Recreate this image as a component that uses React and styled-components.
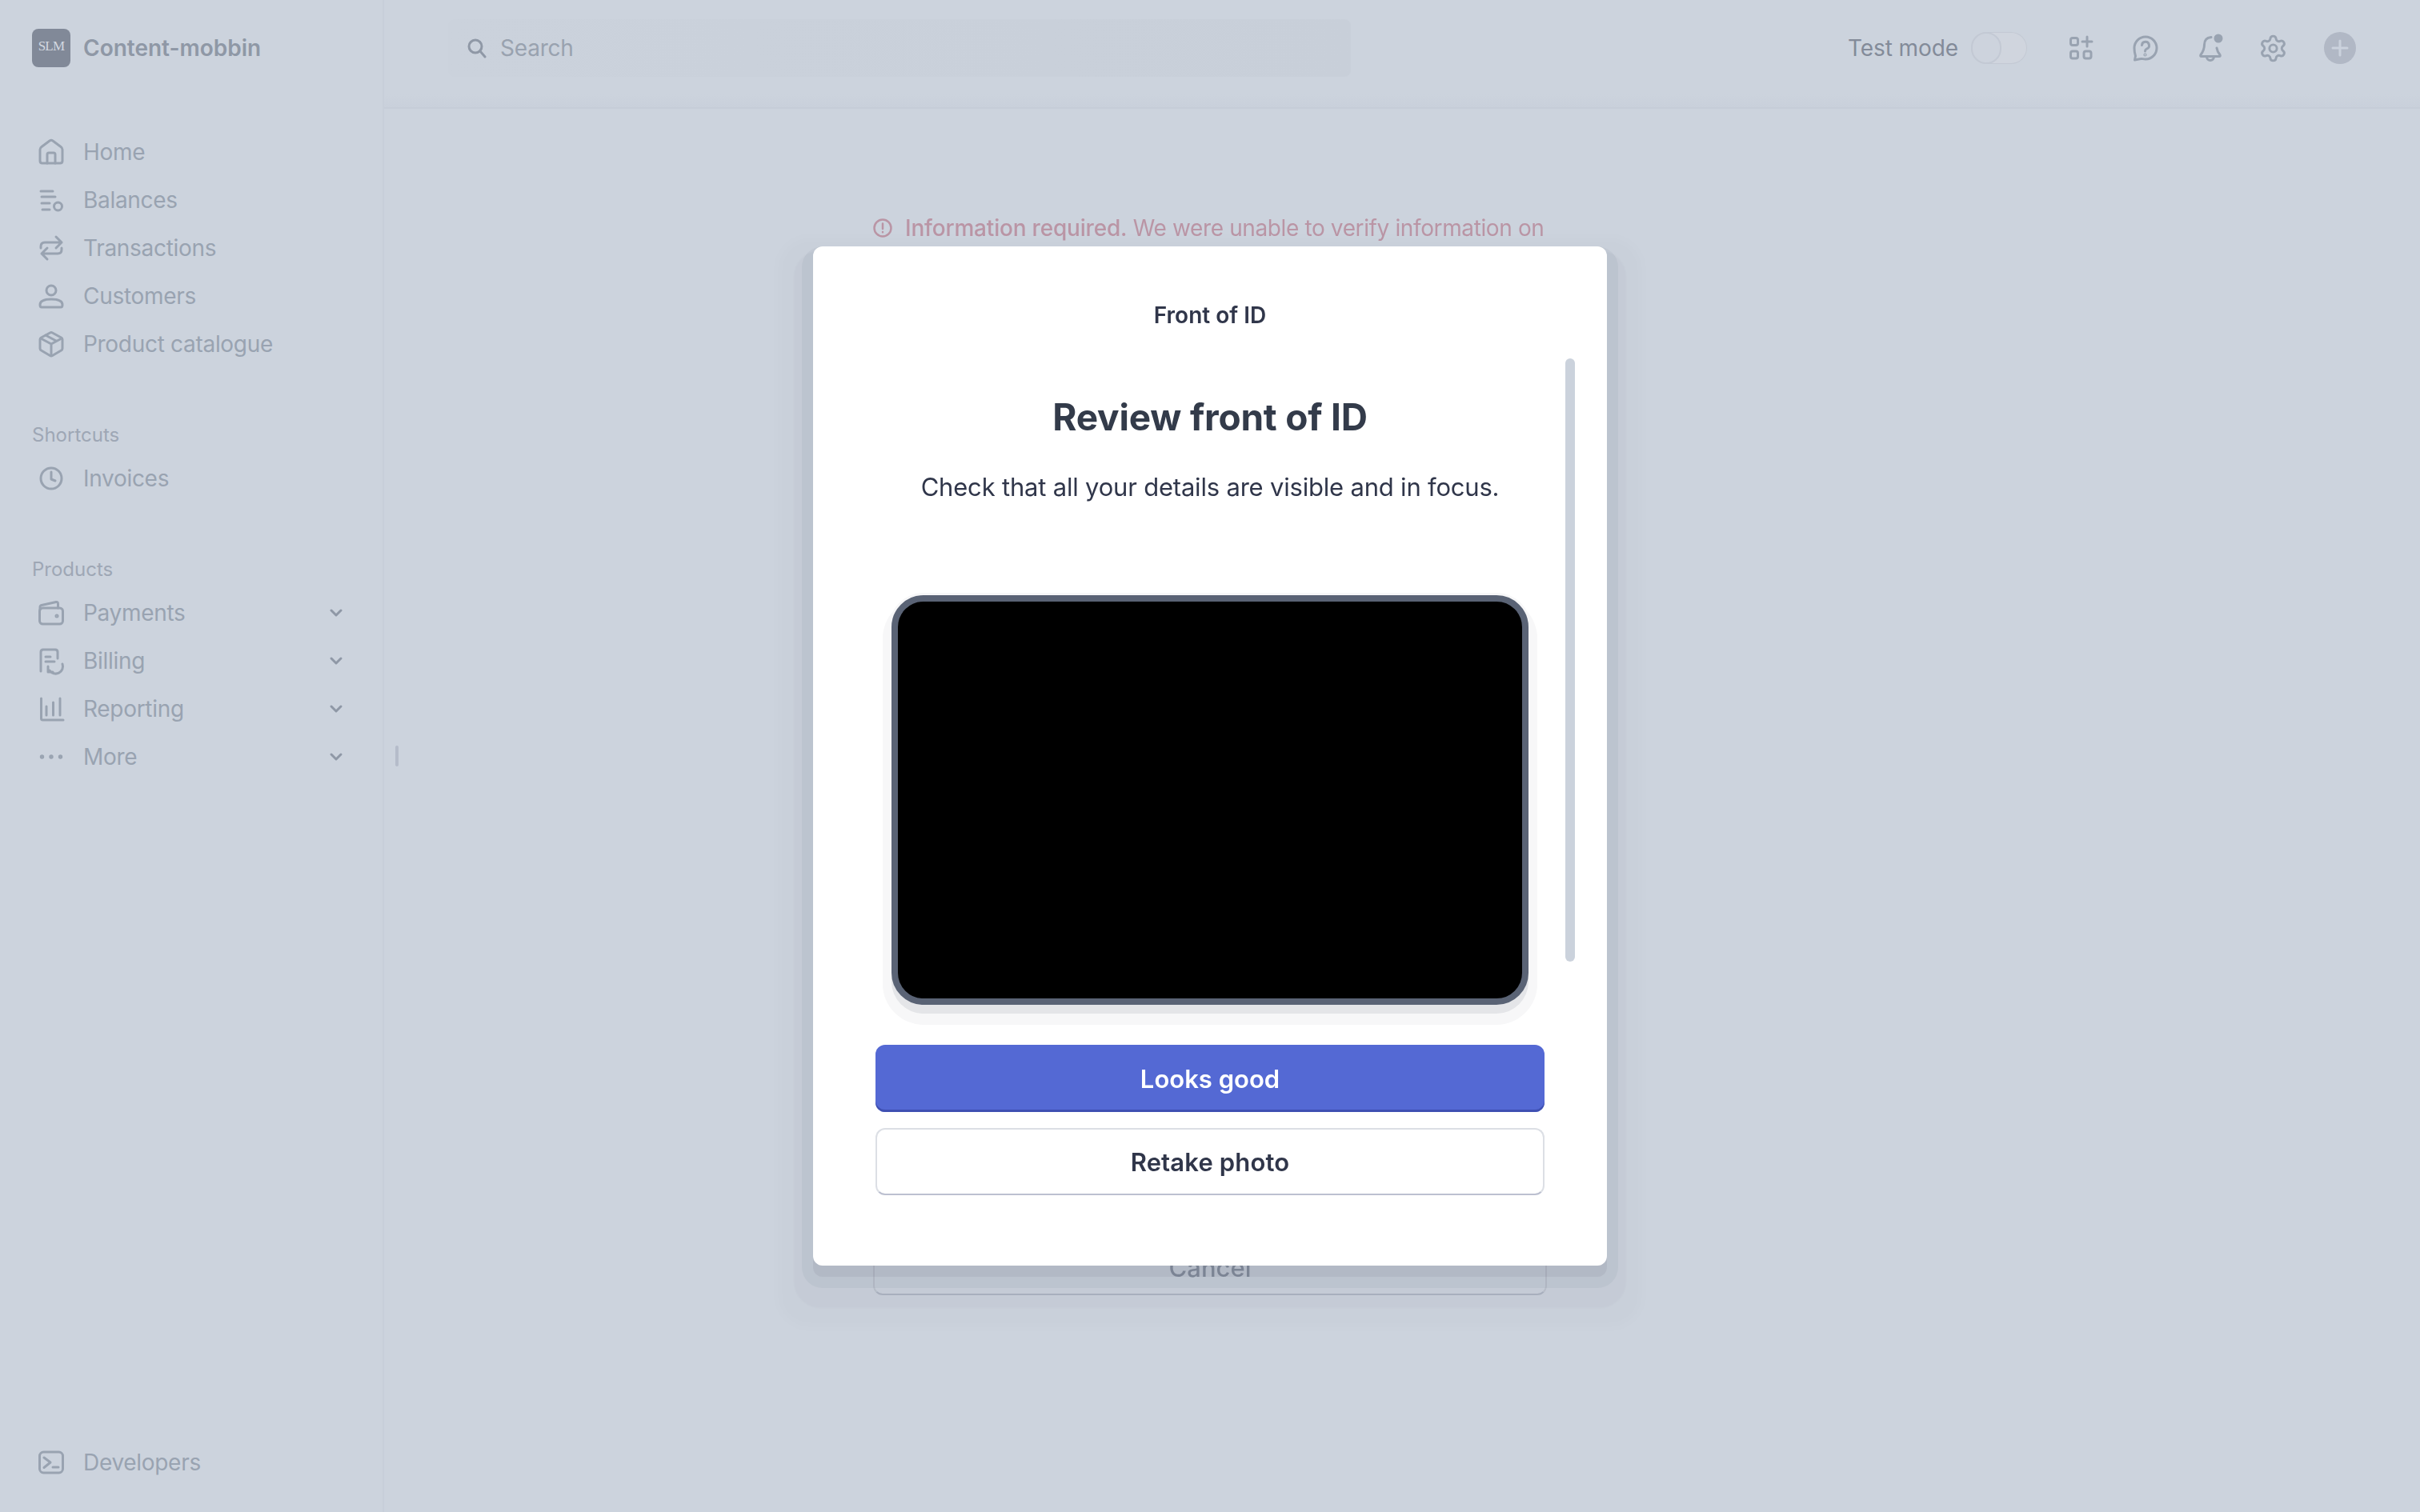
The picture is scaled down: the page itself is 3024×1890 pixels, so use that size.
import React from "react";
import styled, { createGlobalStyle } from "styled-components";
import { Settings } from "lucide-react";

const GlobalStyle = createGlobalStyle`
  html, body {
    margin: 0;
    height: 100%;
    background: #ccd3dd;
    font-family: "Inter", "Liberation Sans", sans-serif;
  }
  * {
    box-sizing: border-box;
  }
`;

const Page = styled.div`
  display: flex;
  width: 100%;
  height: 100vh;
  overflow: hidden;
  background: #ccd3dd;
`;

const Sidebar = styled.aside`
  position: relative;
  display: flex;
  flex-direction: column;
  flex: 0 0 480px;
  padding: 36px 0 32px;
  border-right: 2px solid #c7ced9;
`;

const Brand = styled.div`
  display: flex;
  align-items: center;
  gap: 16px;
  height: 48px;
  padding-left: 40px;
  margin-bottom: 76px;
`;

const LogoBox = styled.div`
  display: flex;
  justify-content: center;
  padding-top: 12px;
  width: 48px;
  height: 48px;
  border-radius: 8px;
  background: #818998;
  color: #d3d8e0;
  font-family: "Liberation Serif", serif;
  font-size: 17px;
  line-height: 20px;
  letter-spacing: -0.8px;
  overflow: hidden;
`;

const BrandName = styled.span`
  font-size: 28px;
  font-weight: 600;
  color: #8f98a6;
`;

const NavGroup = styled.nav`
  display: flex;
  flex-direction: column;
  margin-bottom: 68px;
`;

const GroupLabel = styled.div`
  height: 32px;
  margin-bottom: 8px;
  padding-left: 40px;
  font-size: 24px;
  line-height: 32px;
  color: #9ea7b5;
`;

const NavRow = styled.a`
  display: flex;
  align-items: center;
  gap: 24px;
  height: 60px;
  padding: 0 48px 0 48px;
  font-size: 28px;
  letter-spacing: -0.3px;
  color: #99a3b1;
`;

const NavText = styled.span`
  flex: 1;
`;

const BottomNav = styled.div`
  margin-top: auto;
`;

const ResizeHandle = styled.div`
  position: absolute;
  left: 494px;
  top: 932px;
  width: 4px;
  height: 26px;
  border-radius: 2px;
  background: #b5bcca;
`;

const Main = styled.main`
  flex: 1;
  min-width: 0;
`;

const TopBar = styled.header`
  display: flex;
  align-items: center;
  justify-content: space-between;
  height: 136px;
  padding: 0 80px 14px 80px;
  border-bottom: 2px solid #c6cdd8;
  background: linear-gradient(to bottom, #ccd3dd 88%, #c9d0db 100%);
`;

const SearchBox = styled.div`
  display: flex;
  align-items: center;
  gap: 17px;
  width: 1128px;
  height: 72px;
  padding-left: 24px;
  border-radius: 8px;
  background: linear-gradient(to right, #cbd2dc, #c8cfd9);
  font-size: 28px;
  letter-spacing: -0.2px;
  color: #99a2af;
`;

const TopActions = styled.div`
  display: flex;
  align-items: center;
`;

const TestLabel = styled.span`
  margin-right: 16px;
  font-size: 28px;
  letter-spacing: -0.1px;
  color: #838b99;
`;

const Toggle = styled.div`
  width: 70px;
  height: 40px;
  margin-right: 51px;
  border-radius: 20px;
  background: #d0d5de;
  box-shadow: inset 0 0 0 1px #c3c9d4;
`;

const ToggleKnob = styled.div`
  width: 38px;
  height: 40px;
  border-radius: 20px;
  background: #cdd3dd;
  border: 2px solid #c3c9d4;
`;

const IconSlot = styled.div`
  display: flex;
  align-items: center;
  justify-content: center;
  width: 32px;
  height: 32px;
  margin-right: ${(p) => p.$gap}px;
  color: #99a3b1;
`;

const AddButton = styled.div`
  display: flex;
  align-items: center;
  justify-content: center;
  width: 40px;
  height: 40px;
  border-radius: 50%;
  background: #b1b8c5;
`;

const Overlay = styled.div`
  position: fixed;
  inset: 0;
  display: flex;
  flex-direction: column;
  align-items: center;
  padding-top: 308px;
`;

const BackSheet = styled.div`
  position: absolute;
  top: 266px;
  left: 1091px;
  display: flex;
  flex-direction: column;
  justify-content: space-between;
  width: 842px;
  height: 1353px;
`;

const Notice = styled.div`
  display: flex;
  align-items: center;
  gap: 16px;
  height: 38px;
  font-size: 28px;
  letter-spacing: -0.38px;
  color: #ba95a5;
  white-space: nowrap;
`;

const NoticeStrong = styled.span`
  font-weight: 500;
  letter-spacing: -0.2px;
`;

const CancelButton = styled.div`
  display: flex;
  align-items: center;
  justify-content: center;
  height: 70px;
  border: 2px solid #bcc3ce;
  border-bottom-color: #aeb5c3;
  border-radius: 12px;
  font-size: 31px;
  font-weight: 500;
  color: #8b93a2;
`;

const Modal = styled.section`
  position: relative;
  width: 992px;
  height: 1274px;
  padding: 66px 78px 0;
  border-radius: 12px;
  background: #fff;
  box-shadow:
    0 14px 0 0 rgba(60, 66, 87, 0.08),
    0 14px 0 14px rgba(60, 66, 87, 0.055),
    0 29px 2px 24px rgba(60, 66, 87, 0.03),
    0 33px 16px 44px rgba(60, 66, 87, 0.014);
`;

const ModalTitle = styled.div`
  height: 40px;
  font-size: 28px;
  font-weight: 600;
  line-height: 40px;
  text-align: center;
  color: #30364a;
`;

const ScrollThumb = styled.div`
  position: absolute;
  top: 140px;
  right: 40px;
  width: 12px;
  height: 754px;
  border-radius: 6px;
  background: #cbd2dc;
`;

const Heading = styled.h1`
  margin: 77px 0 0;
  font-size: 46px;
  font-weight: 700;
  line-height: 60px;
  letter-spacing: -0.2px;
  text-align: center;
  color: #333b4a;
`;

const Lead = styled.p`
  margin: 36px 0 0;
  font-size: 31px;
  line-height: 44px;
  letter-spacing: -0.2px;
  text-align: center;
  color: #30364a;
`;

const PhotoFrame = styled.div`
  height: 512px;
  margin: 113px 20px 50px;
  border: 8px solid #5a6375;
  border-radius: 40px;
  background: #000;
  box-shadow:
    0 11px 0 0 #e4e5e8,
    0 14px 0 11px #f7f7f8,
    0 0 0 3px #f7f7f8;
`;

const ActionButton = styled.button`
  display: block;
  width: 100%;
  height: 84px;
  margin-bottom: ${(p) => p.$gap || 0}px;
  border-radius: 12px;
  font-family: inherit;
  font-size: 31px;
  font-weight: 600;
  cursor: pointer;
  ${(p) =>
    p.$primary
      ? `
    border: 0;
    background: #5469d4;
    color: #fff;
    box-shadow: inset 0 -3px 0 #3f50b2;
  `
      : `
    border: 2px solid #dcdfe5;
    border-bottom-color: #bcc0d0;
    background: #fff;
    color: #30364a;
    letter-spacing: 0.15px;
  `}
`;

const Glyph = ({ children, size = 32, fill = "none" }) => (
  <svg
    width={size}
    height={size}
    viewBox={`0 0 ${size} ${size}`}
    fill={fill}
    stroke="currentColor"
    strokeWidth="3"
    strokeLinecap="round"
    strokeLinejoin="round"
    style={{ flex: "none", overflow: "visible" }}
  >
    {children}
  </svg>
);

const icons = {
  home: (
    <>
      <path d="M2 13c0-1.5.8-2.6 2-3.5L14 2q2-1.3 4 0l10 7.5c1.200.9 2 2 2 3.5v14q0 3-3 3H5q-3 0-3-3Z" />
      <path d="M11 30V19q0-2 2-2h6q2 0 2 2v11" />
    </>
  ),
  balances: (
    <>
      <path d="M3 5h15M4 12h17M4 20h10M5 28h9" />
      <circle cx="24.500" cy="24" r="5" />
    </>
  ),
  transactions: (
    <>
      <path d="M3 16v-2q0-5 5-5h21M22 2l7 7-7 7" />
      <path d="M29 16v2q0 5-5 5H4M11 16l-7 7 7 7" />
    </>
  ),
  customers: (
    <>
      <circle cx="16" cy="9" r="6" />
      <path d="M2 27c0-5 6-7 14-7s14 2 14 7q0 3-2 3H4q-2 0-2-3Z" />
    </>
  ),
  catalogue: (
    <>
      <path d="M14.500 2q1.500-.8 3 0L28.500 8q1.500.9 1.500 2.500v11q0 1.600-1.500 2.500L17.500 30.500q-1.500.8-3 0L3.500 24Q2 23.100 2 21.500v-11Q2 8.900 3.500 8Z" />
      <path d="M3 9l13 7 13-7M16 16v14M9 5l13 7" />
    </>
  ),
  invoices: (
    <>
      <circle cx="16" cy="16" r="13" />
      <path d="M16 8v9l5 2" />
    </>
  ),
  payments: (
    <>
      <rect x="1.500" y="10" width="29" height="20" rx="4" />
      <path d="M2 12V9q0-2 2-2.500l18-4q2.500-.5 2.500 2.500v5" />
      <circle cx="23" cy="20" r="1" />
    </>
  ),
  billing: (
    <>
      <path d="M3 29V5q0-3 3-3h15q3 0 3 3v8" />
      <path d="M9 11h6M9 17h11" />
      <path d="M30 20a9 9 0 0 1-16 8M12 23v7h6" />
    </>
  ),
  reporting: (
    <path d="M3.500 3v25q0 2 2 2H31M10 13v11M18.500 8v16M27 3v21" />
  ),
  more: (
    <>
      <circle cx="4.500" cy="16" r="1.200" />
      <circle cx="16" cy="16" r="1.200" />
      <circle cx="27.500" cy="16" r="1.200" />
    </>
  ),
  developers: (
    <>
      <rect x="1.500" y="3" width="29" height="26" rx="5" />
      <path d="M7 10l8 6-8 6.500M18 22h7" />
    </>
  ),
  apps: (
    <>
      <rect x="3.500" y="3.500" width="9" height="9" rx="2.500" />
      <rect x="3.500" y="20" width="9" height="9" rx="2.500" />
      <rect x="20" y="20" width="9" height="9" rx="2.500" />
      <path d="M18 8h12M24 2v12" />
    </>
  ),
  help: (
    <>
      <path d="M17 2a14 14 0 0 1 0 28c-3 0-4-1-6-.500L3.500 31 4.500 26C3.500 23 3 20 3 16A14 14 0 0 1 17 2Z" />
      <path d="M12.500 12.500a4.500 4.500 0 1 1 6 4.500q-2 1-2 3" />
      <circle cx="16.500" cy="24.500" r="0.600" />
    </>
  ),
  bell: (
    <>
      <path d="M17 2.500C11 3 8.500 7 8.500 12c0 6-1.500 8.500-4.500 12.500q-1 2 1 2h22q2 0 1-2c-2-2.500-3.500-5-4-8.500" />
      <path d="M11.500 27a4.500 4.500 0 0 0 9 0" />
      <circle cx="26" cy="4" r="5.500" fill="currentColor" stroke="none" />
    </>
  ),
};

const Chevron = () => (
  <svg width="20" height="20" viewBox="0 0 20 20" fill="none" stroke="#8f98a6" strokeWidth="3" strokeLinecap="round" strokeLinejoin="round">
    <path d="M4 7l6 6 6-6" />
  </svg>
);

const SearchIcon = () => (
  <svg width="24" height="26" viewBox="0 0 24 26" fill="none" stroke="#8f98a6" strokeWidth="3" strokeLinecap="round" style={{ flex: "none" }}>
    <circle cx="10" cy="11" r="8" />
    <path d="M16 17l6 7" />
  </svg>
);

const NoticeIcon = () => (
  <svg width="24" height="24" viewBox="0 0 24 24" fill="none" stroke="#ba95a5" strokeWidth="2.500" strokeLinecap="round" style={{ flex: "none" }}>
    <circle cx="12" cy="12" r="10.500" />
    <path d="M12 6.500V13M12 17v.2" />
  </svg>
);

const PlusIcon = () => (
  <svg width="24" height="24" viewBox="0 0 24 24" fill="none" stroke="#cbd2dd" strokeWidth="3" strokeLinecap="round">
    <path d="M12 3v18M3 12h18" />
  </svg>
);

const mainNav = [
  ["home", "Home"],
  ["balances", "Balances"],
  ["transactions", "Transactions"],
  ["customers", "Customers"],
  ["catalogue", "Product catalogue"],
];

const productNav = [
  ["payments", "Payments"],
  ["billing", "Billing"],
  ["reporting", "Reporting"],
  ["more", "More"],
];

const NavItem = ({ icon, label, expandable }) => (
  <NavRow>
    <Glyph>{icons[icon]}</Glyph>
    <NavText>{label}</NavText>
    {expandable && <Chevron />}
  </NavRow>
);

export default function App() {
  return (
    <Page>
      <GlobalStyle />
      <Sidebar>
        <Brand>
          <LogoBox>SLM</LogoBox>
          <BrandName>Content-mobbin</BrandName>
        </Brand>
        <NavGroup>
          {mainNav.map(([icon, label]) => (
            <NavItem key={label} icon={icon} label={label} />
          ))}
        </NavGroup>
        <NavGroup>
          <GroupLabel>Shortcuts</GroupLabel>
          <NavItem icon="invoices" label="Invoices" />
        </NavGroup>
        <NavGroup>
          <GroupLabel>Products</GroupLabel>
          {productNav.map(([icon, label]) => (
            <NavItem key={label} icon={icon} label={label} expandable />
          ))}
        </NavGroup>
        <BottomNav>
          <NavItem icon="developers" label="Developers" />
        </BottomNav>
        <ResizeHandle />
      </Sidebar>
      <Main>
        <TopBar>
          <SearchBox>
            <SearchIcon />
            Search
          </SearchBox>
          <TopActions>
            <TestLabel>Test mode</TestLabel>
            <Toggle>
              <ToggleKnob />
            </Toggle>
            <IconSlot $gap={48}>
              <Glyph>{icons.apps}</Glyph>
            </IconSlot>
            <IconSlot $gap={50}>
              <Glyph>{icons.help}</Glyph>
            </IconSlot>
            <IconSlot $gap={46}>
              <Glyph>{icons.bell}</Glyph>
            </IconSlot>
            <IconSlot $gap={48}>
              <Settings size={37} strokeWidth={1.9} style={{ flex: "none" }} />
            </IconSlot>
            <AddButton>
              <PlusIcon />
            </AddButton>
          </TopActions>
        </TopBar>
      </Main>
      <Overlay>
        <BackSheet>
          <Notice>
            <NoticeIcon />
            <span>
              <NoticeStrong>Information required.</NoticeStrong> We were unable to verify information on
            </span>
          </Notice>
          <CancelButton>Cancel</CancelButton>
        </BackSheet>
        <Modal>
          <ModalTitle>Front of ID</ModalTitle>
          <ScrollThumb />
          <Heading>Review front of ID</Heading>
          <Lead>Check that all your details are visible and in focus.</Lead>
          <PhotoFrame />
          <ActionButton $primary $gap={20}>
            Looks good
          </ActionButton>
          <ActionButton>Retake photo</ActionButton>
        </Modal>
      </Overlay>
    </Page>
  );
}
